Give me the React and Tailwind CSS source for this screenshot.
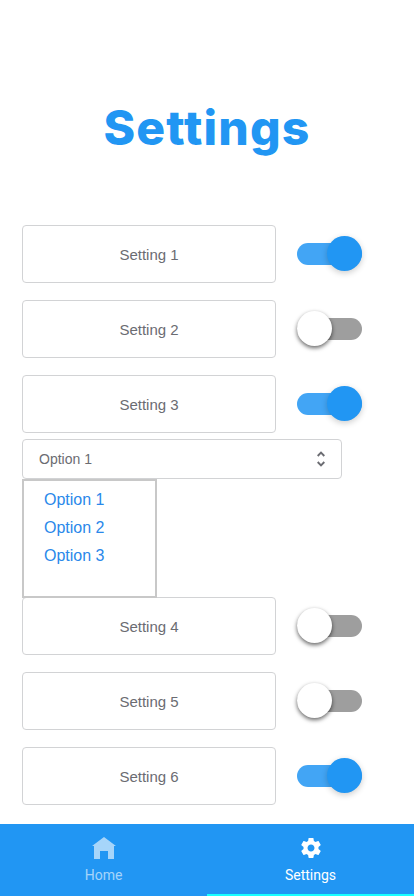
import { useState } from "react";

const OPTIONS = ["Option 1", "Option 2", "Option 3"];

function SettingRow({ id, label, initial }) {
  const [on, setOn] = useState(initial);
  return (
    <div className="flex items-center gap-[21px]">
      <label
        htmlFor={id}
        className="flex h-[58px] w-[254px] items-center justify-center rounded border border-[#d2d3d5] pt-0.5 text-[15px] text-[#6b6c72]"
      >
        {label}
      </label>
      <input
        id={id}
        type="checkbox"
        role="switch"
        checked={on}
        onChange={(e) => setOn(e.target.checked)}
        className="flex h-[22px] w-[65px] cursor-pointer appearance-none items-center rounded-full bg-[#9e9e9e] before:-mt-px before:size-[35px] before:shrink-0 before:rounded-full before:bg-white before:shadow-[0_2px_4px_rgba(0,0,0,0.6)] before:content-[''] checked:justify-end checked:bg-[#42a5f5] checked:before:bg-[#2196f3] checked:before:shadow-[0_2px_6px_rgba(0,0,0,0.2)]"
      />
    </div>
  );
}

function HomeIcon() {
  return (
    <svg width="24" height="24" viewBox="0 0 24 24" fill="currentColor" aria-hidden="true">
      <path d="M12 1L24 10H22V23H16V15H8V23H2V10H0Z" />
    </svg>
  );
}

function GearIcon() {
  return (
    <svg width="24" height="24" viewBox="0 0 24 24" fill="currentColor" aria-hidden="true">
      <path d="M19.43 12.98c.04-.32.07-.64.07-.98s-.03-.66-.07-.98l2.11-1.65c.19-.15.24-.42.12-.64l-2-3.46c-.12-.22-.39-.3-.61-.22l-2.49 1c-.52-.4-1.08-.73-1.69-.98l-.38-2.65C14.46 2.18 14.25 2 14 2h-4c-.25 0-.46.18-.49.42l-.38 2.65c-.61.25-1.17.59-1.69.98l-2.49-1c-.23-.09-.49 0-.61.22l-2 3.46c-.13.22-.07.49.12.64l2.11 1.65c-.04.32-.07.65-.07.98s.03.66.07.98l-2.11 1.65c-.19.15-.24.42-.12.64l2 3.46c.12.22.39.3.61.22l2.49-1c.52.4 1.08.73 1.69.98l.38 2.65c.03.24.24.42.49.42h4c.25 0 .46-.18.49-.42l.38-2.65c.61-.25 1.17-.59 1.69-.98l2.49 1c.23.09.49 0 .61-.22l2-3.46c.12-.22.07-.49-.12-.64l-2.11-1.65zM12 15.5c-1.93 0-3.5-1.57-3.5-3.5s1.57-3.5 3.5-3.5 3.5 1.57 3.5 3.5-1.57 3.5-3.5 3.5z" />
    </svg>
  );
}

function CaretsIcon() {
  return (
    <svg
      width="20"
      height="20"
      viewBox="0 0 20 20"
      fill="none"
      stroke="currentColor"
      strokeWidth="1.9"
      className="pointer-events-none col-start-1 row-start-1 mr-[11px] justify-self-end text-[#6b6c72]"
      aria-hidden="true"
    >
      <path d="M6.7 7L10 3.7L13.3 7M6.7 13L10 16.3L13.3 13" />
    </svg>
  );
}

export default function App() {
  const [option, setOption] = useState(OPTIONS[0]);
  return (
    <div className="flex min-h-screen flex-col bg-white font-['Liberation_Sans',Arial,sans-serif]">
      <main className="px-[22px] pb-[19px]">
        <h1 className="pt-[100px] pb-[69px] text-center font-['Inter',sans-serif] text-5xl leading-[56px] font-extrabold tracking-wide text-[#2196f3]">
          Settings
        </h1>

        <div className="flex flex-col gap-[17px]">
          <SettingRow id="setting-1" label="Setting 1" initial={true} />
          <SettingRow id="setting-2" label="Setting 2" initial={false} />
          <SettingRow id="setting-3" label="Setting 3" initial={true} />
        </div>

        <div className="mt-1.5 grid max-w-80 items-center">
          <select
            aria-label="Setting 3 option"
            value={option}
            onChange={(e) => setOption(e.target.value)}
            className="col-start-1 row-start-1 h-10 w-full appearance-none rounded border border-[#d2d3d5] bg-white px-4 text-sm text-[#6b6c72]"
          >
            {OPTIONS.map((name) => (
              <option key={name}>{name}</option>
            ))}
          </select>
          <CaretsIcon />
        </div>

        <ul className="relative h-[119px] w-[135px] border-2 border-[#c8c8c8] px-5 pt-[5px]">
          {OPTIONS.map((name) => (
            <li key={name}>
              <button
                type="button"
                onClick={() => setOption(name)}
                className="block h-7 text-base leading-7 text-[#2a88ea]"
              >
                {name}
              </button>
            </li>
          ))}
        </ul>

        <div className="-mt-px flex flex-col gap-[17px]">
          <SettingRow id="setting-4" label="Setting 4" initial={false} />
          <SettingRow id="setting-5" label="Setting 5" initial={false} />
          <SettingRow id="setting-6" label="Setting 6" initial={true} />
        </div>
      </main>

      <nav className="mt-auto grid h-[72px] grid-cols-2 bg-[#2196f3] font-['Roboto',sans-serif] text-sm leading-5">
        <a
          href="#home"
          className="flex flex-col items-center gap-[5px] border-b-2 border-transparent pt-3 text-white/60"
        >
          <HomeIcon />
          Home
        </a>
        <a
          href="#settings"
          aria-current="page"
          className="flex flex-col items-center gap-[5px] border-b-2 border-[#18ffff] pt-3 text-white"
        >
          <GearIcon />
          Settings
        </a>
      </nav>
    </div>
  );
}
